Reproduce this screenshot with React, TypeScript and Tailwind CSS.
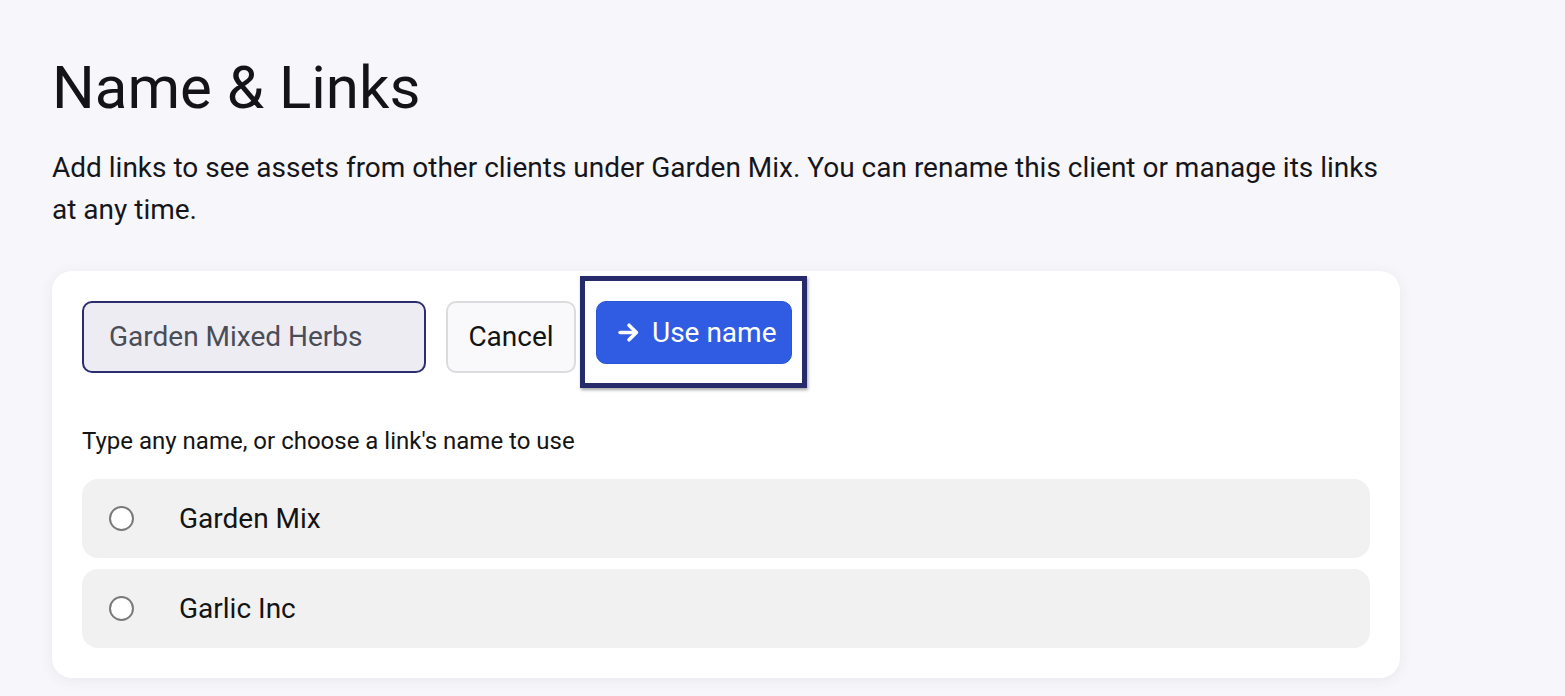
import React from "react";

function ArrowIcon() {
  return (
    <svg width="21" height="21" viewBox="0 0 20 20" fill="none" stroke="white" strokeWidth="3.4" strokeLinecap="round" strokeLinejoin="round">
      <path d="M2 10h15" />
      <path d="M10.5 3l7 7-7 7" />
    </svg>
  );
}

function RadioRow({ label }: { label: string }) {
  return (
    <div className="flex h-[79px] items-center rounded-[16px] bg-[#f1f1f1] pl-[27px]">
      <span className="h-[25px] w-[25px] shrink-0 rounded-full border-2 border-[#7a7a7a] bg-white" />
      <span className="ml-[45px] text-[28px] text-[#141414]">{label}</span>
    </div>
  );
}

export default function App() {
  return (
    <div
      className="min-h-[696px] bg-[#f7f7fb] px-[52px] pt-[52px] pb-[18px] text-[#131318]"
      style={{ fontFamily: "Roboto, 'Noto Sans', sans-serif" }}
    >
      <h1 className="text-[60px] leading-[72px] font-normal">Name &amp; Links</h1>
      <p className="mt-[23px] max-w-[1345px] text-[28px] leading-[42px] text-[#16161a]">
        Add links to see assets from other clients under Garden Mix. You can rename this client or manage its links at any time.
      </p>
      <div className="mt-[40px] w-[1348px] rounded-[20px] bg-white p-[30px] shadow-[0_2px_14px_rgba(20,20,60,0.07)]">
        <div className="flex items-start">
          <div className="flex h-[72px] w-[344px] items-center rounded-[10px] border-2 border-[#2a2d6e] bg-[#ececf2] pl-[25px] text-[28px] text-[#4a4d56]">
            Garden Mixed Herbs
          </div>
          <button className="ml-[20px] h-[72px] w-[130px] rounded-[10px] border-2 border-[#dcdcdf] bg-[#f9f9fb] text-[28px] text-[#141414]">
            Cancel
          </button>
          <div className="relative ml-[20px]">
            <span className="absolute -left-[16px] -right-[15px] -top-[25px] -bottom-[24px] border-[5px] border-[#282b6b] shadow-[1px_2px_3px_rgba(0,0,0,0.35)]" />
            <button className="relative flex h-[63px] w-[196px] items-center rounded-[10px] border border-[#2a55d6] bg-[#2f5ce2] pl-[21px] text-[28px] text-white">
              <ArrowIcon />
              <span className="ml-[13px]">Use name</span>
            </button>
          </div>
        </div>
        <div className="mt-[53px] text-[24px] leading-[30px] text-[#141414]">
          Type any name, or choose a link's name to use
        </div>
        <div className="mt-[23px] flex flex-col gap-[11px]">
          <RadioRow label="Garden Mix" />
          <RadioRow label="Garlic Inc" />
        </div>
      </div>
    </div>
  );
}
